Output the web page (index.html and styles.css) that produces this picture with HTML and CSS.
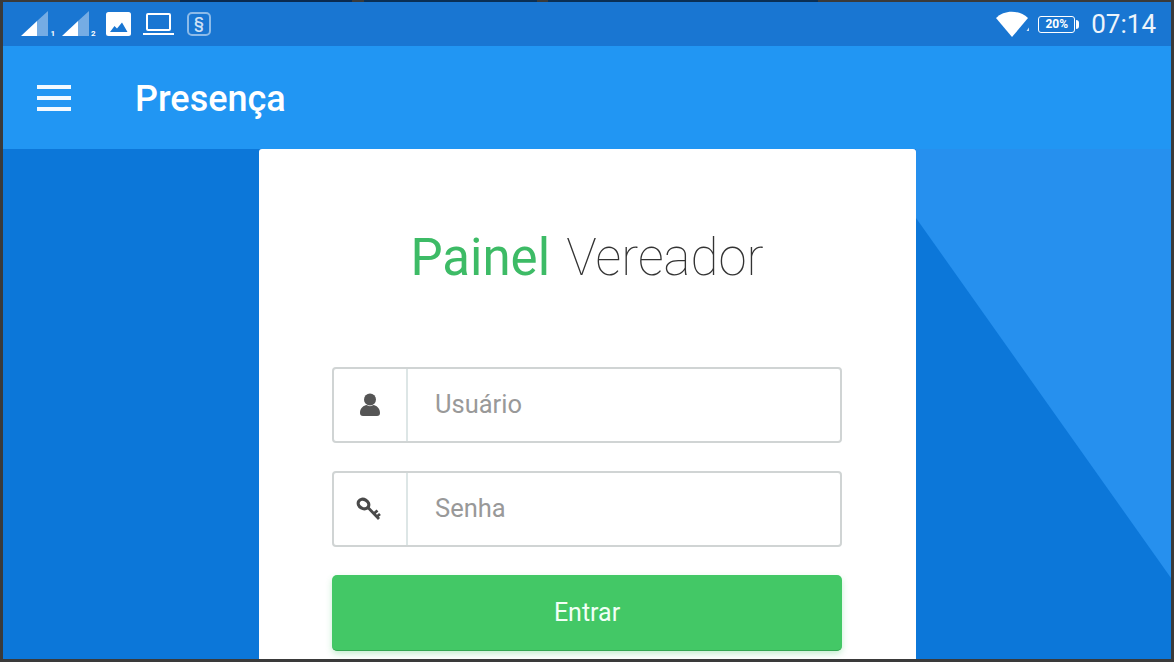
FILE: index.html
```html
<!DOCTYPE html>
<html lang="pt-BR">
<head>
  <meta charset="UTF-8" />
  <title>Presença</title>
  <link rel="stylesheet" href="styles.css">
</head>
<body>
  <div class="screen">

    <div class="status-bar">
      <div class="status-left">
        <svg class="ico-signal" width="35" height="28" viewBox="0 0 35 28">
          <path d="M0 26 L16 26 L16 11 Z" fill="#fff"/>
          <path d="M16 11 L27 1 L27 26 L16 26 Z" fill="#fff" opacity="0.4"/>
          <text x="29.5" y="26" class="sim-num">1</text>
        </svg>
        <svg class="ico-signal" width="35" height="28" viewBox="0 0 35 28">
          <path d="M0 26 L16 26 L16 11 Z" fill="#fff"/>
          <path d="M16 11 L27 1 L27 26 L16 26 Z" fill="#fff" opacity="0.4"/>
          <text x="29" y="26" class="sim-num">2</text>
        </svg>
        <svg class="ico-image" width="25" height="24" viewBox="0 0 25 24">
          <rect width="25" height="24" rx="2.5" fill="#fff"/>
          <path d="M4 20 L8.5 14 L11 16.5 L16 10.5 L21.5 20 Z" fill="#1976d2"/>
        </svg>
        <svg class="ico-laptop" width="31" height="24" viewBox="0 0 31 24">
          <rect x="4" y="2" width="23" height="16" rx="1" fill="none" stroke="#fff" stroke-width="2"/>
          <path d="M0 22 H31" stroke="#fff" stroke-width="2"/>
        </svg>
        <div class="ico-section">§</div>
      </div>
      <div class="status-right">
        <svg class="ico-wifi" width="34" height="26" viewBox="0 0 34 26">
          <path d="M0 7 C8 -1.5 23 -1.5 32 7 L16 26 Z" fill="#fff"/>
          <path d="M30.5 20 L33 20 L33 16.5 Z" fill="#fff" opacity="0.8"/>
        </svg>
        <div class="battery"><span class="battery-text">20%</span></div>
        <div class="clock">07:14</div>
      </div>
    </div>

    <div class="app-bar">
      <div class="menu-btn"><span></span><span></span><span></span></div>
      <div class="app-title">Presença</div>
    </div>

    <div class="content">
      <div class="bg-light"></div>
      <div class="card">
        <h1 class="card-title"><span class="green">Painel</span> Vereador</h1>

        <div class="field">
          <div class="field-icon">
            <svg width="22" height="24" viewBox="0 0 22 24">
              <circle cx="11" cy="6.5" r="6" fill="#555"/>
              <path d="M1 20 C1 14.5 5 12.5 7.5 12 C9.5 13.5 12.5 13.5 14.5 12 C17 12.5 21 14.5 21 20 C21 22 20 23 18 23 H4 C2 23 1 22 1 20 Z" fill="#555"/>
            </svg>
          </div>
          <div class="field-text">Usuário</div>
        </div>

        <div class="field">
          <div class="field-icon">
            <svg class="ico-key" width="26" height="26" viewBox="0 0 26 26">
              <ellipse cx="7.5" cy="8" rx="5.5" ry="4.5" transform="rotate(30 7.5 8)" fill="none" stroke="#4a4a4a" stroke-width="3.2"/>
              <path d="M12 11.5 L23 23 M18 17.5 L21.5 14.5 M21 20.5 L24 18" fill="none" stroke="#4a4a4a" stroke-width="2.8"/>
            </svg>
          </div>
          <div class="field-text">Senha</div>
        </div>

        <div class="btn-enter">Entrar</div>
      </div>
    </div>

  </div>
</body>
</html>
```

FILE: styles.css
```css
html, body {
  margin: 0;
  height: 100%;
}
body {
  background: linear-gradient(90deg, #3a3a3a 180px, #0a2a50 180px, #0a2a50 352px, #3a3a3a 352px, #3a3a3a 364px, #0a2f55 364px, #0a2f55 537px, #3a3a3a 537px, #3a3a3a 548px, #0a2f55 548px, #0a2f55 818px, #3a3a3a 818px) top / 100% 2px no-repeat, #3a3a3a;
  font-family: 'Roboto', sans-serif;
  overflow: hidden;
}
.screen {
  width: 1168px;
  height: 657px;
  margin: 2px 0 0 3px;
  display: flex;
  flex-direction: column;
  overflow: hidden;
}

/* status bar */
.status-bar {
  height: 44px;
  background-color: #1976d2;
  display: flex;
  justify-content: space-between;
  align-items: center;
  color: white;
}
.status-left {
  display: flex;
  align-items: center;
  padding-left: 18px;
}
.ico-signal {
  margin-right: 6px;
}
.sim-num {
  font-size: 8px;
  font-weight: 700;
  fill: #fff;
}
.ico-image {
  margin-left: 3px;
}
.ico-laptop {
  margin-left: 12px;
}
.ico-section {
  width: 20px;
  height: 20px;
  margin-left: 13px;
  border: 2px solid rgba(255, 255, 255, 0.5);
  border-radius: 5px;
  text-align: center;
  font-size: 16px;
  font-weight: 500;
  line-height: 20px;
  color: rgba(255, 255, 255, 0.8);
}
.status-right {
  display: flex;
  align-items: center;
  padding-right: 15px;
}
.battery {
  position: relative;
  width: 35px;
  height: 15px;
  margin-left: 8px;
  border: 1.5px solid #fff;
  border-radius: 3px;
  text-align: center;
}
.battery::after {
  content: "";
  position: absolute;
  right: -5px;
  top: 3px;
  width: 3px;
  height: 9px;
  background-color: #fff;
  border-radius: 0 3px 3px 0;
}
.battery-text {
  display: block;
  font-size: 12px;
  font-weight: 700;
  line-height: 15px;
}
.clock {
  margin-left: 16px;
  font-size: 26px;
  font-weight: 400;
  opacity: 0.92;
}

/* app bar */
.app-bar {
  height: 103px;
  background-color: #2196f3;
  display: flex;
  align-items: center;
  color: white;
}
.menu-btn {
  width: 34px;
  margin-left: 34px;
  display: flex;
  flex-direction: column;
  gap: 7px;
}
.menu-btn span {
  height: 4px;
  background-color: #f2f9ff;
}
.app-title {
  margin-left: 64px;
  padding-top: 2px;
  font-size: 36px;
  font-weight: 500;
}

/* content */
.content {
  position: relative;
  flex: 1;
  background-color: #0c77d9;
  overflow: hidden;
}
.bg-light {
  position: absolute;
  inset: 0;
  background-color: #2690ee;
  clip-path: polygon(913px 69px, 1168px 429px, 1168px 0, 913px 0);
}
.card {
  position: relative;
  width: 510px;
  height: 510px;
  margin-left: 256px;
  padding: 0 74px 0 73px;
  background-color: white;
  border-radius: 3px 3px 0 0;
}
.card-title {
  margin: 0;
  padding: 70px 0 71px;
  height: 77px;
  line-height: 77px;
  font-size: 51px;
  font-weight: 100;
  text-align: center;
  color: #333;
  word-spacing: 4px;
}
.green {
  font-weight: 400;
  color: #3dbb66;
}

.field {
  height: 72px;
  margin-bottom: 28px;
  border: 2px solid #d0d4d4;
  border-radius: 4px;
  display: flex;
  align-items: center;
}
.field-icon {
  width: 72px;
  height: 100%;
  border-right: 2px solid #dde6e6;
  display: flex;
  justify-content: center;
  align-items: center;
}
.ico-key {
  margin-right: 2px;
}
.field-text {
  margin-left: 27px;
  padding-bottom: 2px;
  font-size: 25.5px;
  color: #999;
}
.btn-enter {
  height: 75px;
  background-color: #43c866;
  border-bottom: 1px solid #35a653;
  border-radius: 5px;
  box-shadow: 0 3px 6px rgba(67, 200, 102, 0.3);
  color: #f2fff6;
  font-size: 25px;
  line-height: 75px;
  text-align: center;
}
```
